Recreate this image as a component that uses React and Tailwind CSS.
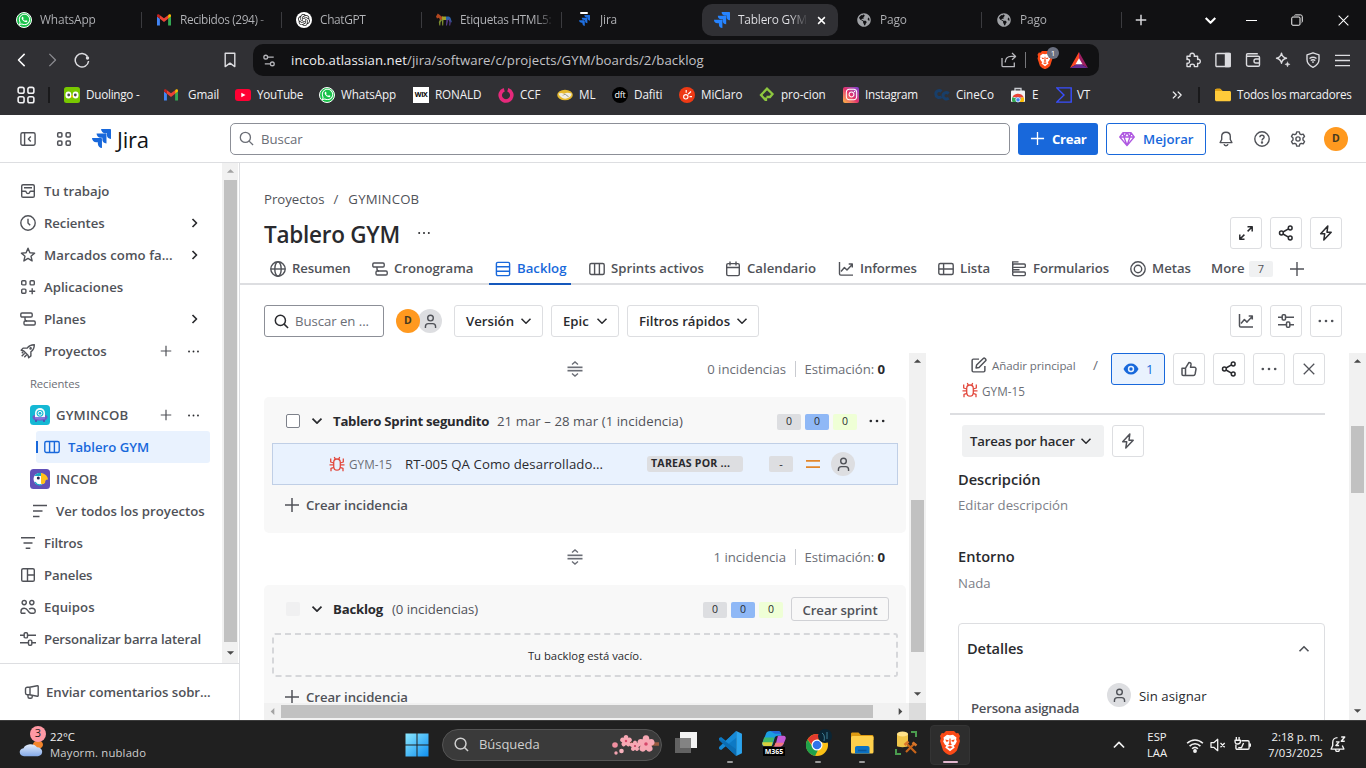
import React from "react";
import { FaWhatsapp, FaInstagram, FaGlobeAmericas } from "react-icons/fa";
import { SiOpenai } from "react-icons/si";

/* ---------- icon helpers ---------- */

const Svg = ({ s = 16, vb = "0 0 16 16", sw = 1.4, className = "", children }) => (
  <svg width={s} height={s} viewBox={vb} fill="none" stroke="currentColor" strokeWidth={sw} strokeLinecap="butt" strokeLinejoin="round" className={"shrink-0 " + className}>
    {children}
  </svg>
);

const paths = {
  sidebar: <><rect x="0.9" y="1.8" width="14.2" height="12.4" rx="1.6" /><path d="M4.6 2v12M10.8 5.6 8.4 8l2.4 2.4" /></>,
  grid: <><rect x="1.7" y="1.7" width="4.2" height="4.2" rx="1" /><rect x="10.1" y="1.7" width="4.2" height="4.2" rx="1" /><rect x="1.7" y="10.1" width="4.2" height="4.2" rx="1" /><rect x="10.1" y="10.1" width="4.2" height="4.2" rx="1" /></>,
  inbox: <><rect x="1.7" y="1.7" width="12.6" height="12.6" rx="1.4" /><path d="M4 4.8h8M1.7 8.2h3.6c.5 0 .7.4.9.9.2.7.7 1.4 1.8 1.4s1.600-.7 1.800-1.400c.2-.5.4-.9.9-.9h3.600" /></>,
  clock: <><circle cx="8" cy="8" r="7.200" /><path d="M8 3.800V8l2.200 2.200" /></>,
  star: <path d="M8 1.200 9.900 5.700l4.700.4-3.600 3.100 1.100 4.700L8 11.400l-4.100 2.500L5 9.200 1.400 6.100l4.700-.4z" />,
  apps: <><rect x="1.700" y="1.700" width="4.200" height="4.200" rx="1" /><rect x="10.100" y="1.700" width="4.200" height="4.200" rx="1" /><rect x="1.700" y="10.100" width="4.200" height="4.200" rx="1" /><path d="M12.200 9.200v6M9.200 12.200h6" /></>,
  plan: <><rect x=".8" y="2" width="11.400" height="4" rx="1.200" /><rect x="4" y="10" width="11.200" height="4" rx="1.200" /><path d="M5 6v2a2 2 0 0 0 2 2" /></>,
  rocket: <><path d="M14.300 1.700c-3.300 0-5.400 1-7.100 3.400H3.100L1.200 7.300l2.600.7 4.200 4.200.7 2.600 2.200-1.900V8.800c2.400-1.700 3.400-3.800 3.400-7.100z" /><path d="m4.700 10.200-3 3M6.700 11.700l-2.400 2.500M3.300 8.800l-1.500 1.500" /><circle cx="10.600" cy="5.400" r=".6" /></>,
  board: <><rect x=".8" y="2.500" width="14.400" height="11" rx="1.500" /><path d="M5.600 2.500v11M10.400 2.500v11" /></>,
  lines: <path d="M1 2.500h14M1 8h9.500M1 13.500h6.500" />,
  filter: <path d="M1 2.700h14M3.500 8h9M5.700 13.300h4.600" />,
  panels: <><rect x="1.700" y="1.700" width="12.600" height="12.600" rx="1.400" /><path d="M7.500 1.700v12.600M7.500 8h6.800" /></>,
  team: <><circle cx="4.200" cy="3.600" r="2.100" /><circle cx="11.800" cy="3.600" r="2.100" /><path d="M1 14.200v-2c0-1.700 1.300-2.900 3.200-2.900 2.800 0 3.200 1.900 4.500 3.500.7.900 1.100 1.400 2.200 1.400h2.700c1 0 1.600-.6 1.600-1.600v-.6c0-1.700-1.300-2.800-3.300-2.800-1.200 0-2 .3-2.800.9M1 14.200h4.500" /></>,
  sliders: <><path d="M0 4.300h4M8 4.300h8M0 11.700h8M12 11.700h4" /><rect x="4.200" y="1.700" width="3.300" height="5.200" rx="1" /><rect x="8.500" y="9.100" width="3.300" height="5.200" rx="1" /></>,
  megaphone: <><path d="M5.500 3.300 13.300 1.700c.5-.1.900.2.900.7v9.200c0 .5-.4.800-.9.700L5.500 10.700H3.200a1.700 1.700 0 0 1-1.700-1.700V5c0-1 .8-1.700 1.700-1.700zM6 3.300v7.400M4 10.700v2.100c0 .9.700 1.500 1.500 1.500h1.300c.8 0 1.400-.6 1.400-1.400v-1.700" /></>,
  globe: <><circle cx="8" cy="8" r="7.200" /><ellipse cx="8" cy="8" rx="3.200" ry="7.200" /><path d="M.8 8h14.400" /></>,
  backlog: <><rect x="1.400" y="1.400" width="13.200" height="13.200" rx="1.400" /><path d="M1.400 5.800h13.200M1.400 10.200h13.200" /></>,
  calendar: <><rect x="1.700" y="2.600" width="12.600" height="12" rx="1.400" /><path d="M1.700 6.500h12.600M5 .5v4M11 .5v4" /></>,
  chart: <><path d="M1.500 1v11.800c0 .8.500 1.300 1.300 1.300H15M3 10.500l3.400-4 2.600 2.600 5-5.400M10.700 3h3.600v3.600" /></>,
  table: <><rect x=".8" y="2.500" width="14.400" height="11" rx="1.500" /><path d="M.8 8h14.400M5.600 2.500v11" /></>,
  form: <><path d="M1 .9h6.500M1.700 1v3.500M1.700 8.300v3" /><rect x="1.700" y="3" width="12.600" height="3.400" rx="1" /><path d="M1.700 6v2c0 .5.300.8.800.8h6" /><rect x="1.700" y="11" width="12.600" height="3.600" rx="1" /></>,
  goal: <><circle cx="8" cy="8" r="7.200" /><circle cx="8" cy="8" r="3.700" /></>,
  plus: <path d="M8 1v14M1 8h14" />,
  search: <><circle cx="6.800" cy="6.800" r="5.400" /><path d="m10.800 10.800 4.200 4.200" /></>,
  down: <path d="M3.500 5.700 8 10.200l4.500-4.500" />,
  up: <path d="M3.500 10.200 8 5.700l4.500 4.500" />,
  right: <path d="M5.700 3.500 10.200 8l-4.500 4.500" />,
  navright: <path d="M5.500 4 9.500 8l-4 4" />,
  left: <path d="M10.200 3.500 5.700 8l4.500 4.500" />,
  chevL: <path d="M11 1 4 8l7 7" />,
  chevR: <path d="m5 1 7 7-7 7" />,
  dots: <g fill="currentColor" stroke="none"><circle cx="2.500" cy="8" r="1.150" /><circle cx="8" cy="8" r="1.150" /><circle cx="13.500" cy="8" r="1.150" /></g>,
  expand: <path d="M9.500 1.800h4.700v4.700M14 2 9.600 6.400M6.500 14.200H1.800V9.500M2 14l4.400-4.400" />,
  share: <><circle cx="12.200" cy="3" r="1.900" /><circle cx="3.400" cy="8" r="1.900" /><circle cx="12.200" cy="13" r="1.900" /><path d="m5 7 5.500-3.100M5 9l5.500 3.100" /></>,
  bolt: <path d="M9.800 1 2.700 8.800h4l-.9 6.200 7.400-7.700H9z" />,
  thumb: <path d="M1 7.200h3.500v7.300H2.200c-.7 0-1.200-.5-1.200-1.200zM4.500 7.200 8 1.400c1.400 0 2.200 1 2 2.300L9.500 6.300h3.900c1 0 1.800.9 1.600 1.900l-.9 4.800c-.2.900-.8 1.500-1.700 1.500H4.500" />,
  close: <path d="m2 2 12 12M14 2 2 14" />,
  edit: <><path d="M8.500 2H3.200C2.500 2 2 2.500 2 3.200v9.600c0 .7.500 1.200 1.200 1.200h9.600c.7 0 1.200-.5 1.200-1.200V8.500" /><path d="m5.700 10.300.5-2.700L12.500 1.400c.5-.5 1.100-.5 1.600 0l.6.6c.4.500.4 1.100 0 1.500L8.500 9.800z" /></>,
  person: <><circle cx="8" cy="4.300" r="3" /><path d="M2.600 15v-1.600c0-1.900 1.300-3.100 3.100-3.100h4.600c1.800 0 3.100 1.200 3.100 3.100V15" /></>,
  bell: <><path d="M8 1.200c2.600 0 4.300 1.900 4.300 4.300v3l1.600 3.100H2.100l1.600-3.100v-3C3.700 3.100 5.400 1.200 8 1.200zM6 13.200c.2 1 .9 1.600 2 1.600s1.800-.6 2-1.600" /></>,
  help: <><circle cx="8" cy="8" r="7.200" /><path d="M5.900 6.300c0-1.200.9-2 2.100-2s2.100.8 2.100 1.900c0 1.400-2.100 1.500-2.100 3.200" /><circle cx="8" cy="11.500" r=".5" /></>,
  gear: <><path d="m6.700.9-.5 2-1.400.8-2-.6L1.500 5.400 3 6.900v2.200l-1.500 1.500 1.300 2.300 2-.6 1.400.8.500 2h2.600l.5-2 1.400-.8 2 .6 1.300-2.300L13 9.100V6.900l1.500-1.500-1.300-2.300-2 .6-1.400-.8-.5-2z" /><circle cx="8" cy="8" r="2.100" /></>,
  bug: <><path d="M4.700 6.500c0-2.200 1.200-3.500 3.300-3.500s3.300 1.300 3.300 3.500v3.700c0 2.400-1.300 4-3.300 4s-3.300-1.600-3.300-4z" /><path d="M4.700 7 1.700 6V2.500M11.300 7l3-1V2.500M4.700 8.800H.5M11.300 8.800h4.200M5 11.300l-3 1v2.900M11 11.300l3 1v2.900M5.300 1l1 2.200M10.700 1l-1 2.200" /></>,
  bookmark: <path d="M3.200 1.200h9.600v13.400L8 11.100l-4.800 3.500z" />,
  site: <><circle cx="4" cy="4.400" r="2" /><path d="M6 4.400h6.500M3 11.600h5.500" /><circle cx="11" cy="11.600" r="2" /></>,
  shareout: <path d="M1 6v7.500c0 .7.500 1.200 1.200 1.200h11.100V10.500M4.200 10.400c.2-3.800 2.600-6 6-6h4M11 1l3.600 3.400L11 7.700" />,
  puzzle: <path d="M2 4.300h3.200C4.500 2.500 5.500 1.200 7.200 1.200S9.900 2.500 9.200 4.300h3.400v3.200c1.500-.6 2.700.3 2.700 1.900s-1.200 2.500-2.700 1.900v3.300H9.300c.5-1.500-.4-2.500-2-2.500s-2.500 1-2 2.500H2v-3.500c1.700.6 2.600-.4 2.600-1.800S3.700 6.900 2 7.500z" />,
  wallet: <><path d="M1.500 3.800v8.700c0 1 .7 1.700 1.700 1.700h10c.8 0 1.300-.5 1.300-1.300V5.500c0-.8-.5-1.300-1.300-1.300H2.600c-.7 0-1.100-.5-1.100-1.200s.4-1.200 1.100-1.200h10.200" /><path d="M14.500 7H10.800C9.600 7 9 7.700 9 9s.6 2 1.800 2h3.700" /></>,
  sparkle: <><path d="M6.500 1.200c.5 3.200 1.700 4.400 5 5-3.300.6-4.500 1.800-5 5-.6-3.200-1.800-4.400-5-5 3.200-.6 4.400-1.800 5-5z" /><path d="M12.500 9.700c.3 1.700.9 2.300 2.600 2.600-1.700.3-2.300.9-2.600 2.600-.3-1.700-.9-2.300-2.600-2.600 1.700-.3 2.300-.9 2.600-2.600z" fill="currentColor" strokeWidth=".5" /></>,
  vpn: <><path d="m8 .8 6 2v4.800c0 3.600-2.200 6-6 7.700-3.800-1.700-6-4.100-6-7.700V2.800z" /><path d="M4.500 6.500c2.200-1.600 4.800-1.600 7 0M5.700 8.500c1.500-1 3.100-1 4.600 0M7.200 10.400c.5-.4 1.100-.4 1.600 0" /></>,
  menu: <path d="M0 2.500h16M0 8h16M0 13.500h16" />,
};

const I = ({ n, ...p }) => <Svg {...p}>{paths[n]}</Svg>;

const JiraMark = ({ s = 16, c = "#2684ff" }) => (
  <svg width={s} height={s} viewBox="0 0 24 24" fill={c} className="shrink-0">
    <path d="M11.571 11.513H0a5.218 5.218 0 0 0 5.232 5.215h2.130v2.057A5.215 5.215 0 0 0 12.575 24V12.518a1.005 1.005 0 0 0-1.005-1.005zm5.723-5.756H5.736a5.215 5.215 0 0 0 5.215 5.214h2.129v2.058a5.218 5.218 0 0 0 5.215 5.214V6.758a1.001 1.001 0 0 0-1.001-1.001zM23.013 0H11.455a5.215 5.215 0 0 0 5.215 5.215h2.129v2.057A5.215 5.215 0 0 0 24 12.483V1.005A1.001 1.001 0 0 0 23.013 0Z" />
  </svg>
);

const Whats = () => (
  <span className="flex size-4 shrink-0 items-center justify-center rounded-full border border-white bg-[#19c24a]">
    <FaWhatsapp size={13} color="#fff" />
  </span>
);

const Gmail = () => (
  <svg width="16" height="16" viewBox="0 0 16 16" className="shrink-0">
    <path d="M1 13.500h2.900V6.800L1 4.600z" fill="#4285f4" />
    <path d="M12.100 13.500H15V4.600l-2.900 2.200z" fill="#34a853" />
    <path d="M12.100 3.200v3.600L15 4.600V3.700c0-1.400-1.400-1.800-2.200-1.100z" fill="#fbbc04" />
    <path d="M3.900 6.800V3.200L8 6.300l4.100-3.100v3.600L8 9.900z" fill="#ea4335" />
    <path d="M1 4.600l2.900 2.200V3.200l-.7-.6C2.300 1.900 1 2.400 1 3.700z" fill="#c5221f" />
  </svg>
);

const BraveMark = ({ w, h }) => (
  <svg width={w} height={h} viewBox="0 0 20 24" className="shrink-0">
    <path d="M6 0h8l2.200 2.200 2-.2 1.800 3-.8 2.300.8 2.700-3 9.300c-.5 1.400-4.700 4.700-7 4.700s-6.500-3.300-7-4.700L0 10l.8-2.700L0 5l1.800-3 2 .2z" fill="#fb4a17" />
    <path d="M10 4.300 13 3.800l3.500 2.600-.4 2 .7 2-1.800 3.300-1.400.8 1.200 2L10 20.300l-4.800-3.800 1.200-2-1.400-.8-1.800-3.300.7-2-.4-2L7 3.800z" fill="#fff" />
    <path d="m5.300 8.500 3.400.7-.5 1.400-1.900.1zM14.700 8.500l-3.400.7.5 1.400 1.900.1zM9.400 7.500h1.200l.2 5 1.300.8L10 14.500l-2.100-1.200 1.300-.8zM7.200 16l2.800-1 2.800 1-2.800 1.800z" fill="#fb4a17" />
  </svg>
);

/* ---------- shared pieces ---------- */

const Arrow = ({ dir, c = "#4a4a4a" }) => {
  const d = { up: "M1 6.500h8L5 2.500z", down: "M1 3.500h8L5 7.500z", left: "M7 1v8L3 5z", right: "M3 1v8l4-4z" }[dir];
  return <svg width="9" height="9" viewBox="0 0 10 10" className="shrink-0"><path d={d} fill={c} /></svg>;
};

const Unassigned = () => (
  <span className="flex size-6 shrink-0 items-center justify-center rounded-full bg-[#dddee1] text-[#505258]"><I n="person" s={15} sw={1.5} /></span>
);

const IconBtn = ({ n, s = 16, c = "text-[#292a2e]", sw = 1.5 }) => (
  <button className={"flex size-8 shrink-0 items-center justify-center rounded-[3px] border border-[#dddee1] bg-white " + c}><I n={n} s={s} sw={sw} /></button>
);

const AvatarD = () => (
  <span className="flex size-6 shrink-0 items-center justify-center rounded-full bg-[#ff991f] text-[10.500px] font-bold text-[#44381f]">D</span>
);

/* ---------- browser chrome ---------- */

const tabs = [
  { t: "WhatsApp", i: <Whats /> },
  { t: "Recibidos (294) -", tr: "tracking-[-0.400px]", i: <Gmail /> },
  { t: "ChatGPT", tr: "tracking-[-0.350px]", i: <span className="flex size-4 shrink-0 items-center justify-center rounded-full bg-white"><SiOpenai size={12} color="#222" /></span> },
  { t: "Etiquetas HTML5:", tr: "tracking-[-0.350px]", i: <svg width="16" height="16" viewBox="0 0 16 16" className="shrink-0"><path d="M0 4.500 1.800 1.500l1.700 1.300 2 1.700H7v3.200L4 8 3 5.700l-2 .8z" fill="#b3471f" /><path d="M6 4.500h4V8H6z" fill="#a0a12c" /><path d="M10 4.500h3l1.500 1.200 1.300 4.300-.8.500-1.500-3L13 8h-3z" fill="#2b62a8" /><path d="M4 7.500 2.800 10l.5 3.500h1L4.500 10.500 6 8zM5.800 7.500 6.200 13.500h1L7.500 8z" fill="#7a8b2f" /><path d="M10.500 7.500 10 13.500h1l1-5zM12.300 7.500l1.200 2.500-.3 3.500h1l.6-4-1-2.500z" fill="#5a3f93" /></svg> },
  { t: "Jira", i: <span className="flex size-4 shrink-0 flex-col items-center"><span className="mb-px h-[2px] w-2 rounded-sm bg-white" /><JiraMark s={11} c="#1f6fe0" /></span> },
  { t: "Tablero GYM", active: true, i: <JiraMark s={16} c="#2684ff" /> },
  { t: "Pago", i: <FaGlobeAmericas size={14} color="#a0a2a6" className="mx-px shrink-0" /> },
  { t: "Pago", i: <FaGlobeAmericas size={14} color="#a0a2a6" className="mx-px shrink-0" /> },
];

const TabStrip = () => (
  <div className="flex h-10 items-center bg-[#111113] pl-0.5 text-[11.900px] tracking-[-0.150px] text-[#b4b5b9]">
    {tabs.map((x, k) =>
      x.active ? (
        <div key={k} className="flex h-8 w-[140px] shrink-0">
          <div className="flex h-8 w-[136px] shrink-0 items-center rounded-[10px] bg-[#303034] pl-3 text-[#e4e4e8]">
            {x.i}
            <span className="ml-2 w-[70px] whitespace-nowrap bg-linear-to-r from-[#e4e4e8] from-75% to-[#303034] bg-clip-text tracking-[-0.200px] text-transparent">{x.t}</span>
            <I n="close" s={9} sw={2.600} className="ml-[9px] text-white" />
          </div>
        </div>
      ) : (
        <div key={k} className="flex w-[140px] shrink-0 items-center">
          <div className="flex w-[139px] items-center pl-[14px]">
            <span className="flex w-4 justify-center">{x.i}</span>
            <span className={"ml-2 w-[95px] whitespace-nowrap bg-linear-to-r from-[#b4b5b9] from-80% to-[#111113] bg-clip-text text-transparent " + (x.tr || "")}>{x.t}</span>
          </div>
          {k !== 4 && <span className="h-4 w-px bg-[#3b3b3f]" />}
        </div>
      )
    )}
    <div className="flex w-[38px] justify-center text-[#d6d6da]"><I n="plus" s={12} sw={2} /></div>
    <div className="flex w-[59px] justify-end text-white"><I n="down" s={17} sw={2} /></div>
    <div className="flex flex-1 items-center pl-[27px] text-white">
      <span className="h-px w-[11px] bg-white" />
      <Svg s={12} sw={1.300} className="ml-[34px]"><rect x="1" y="4" width="11" height="11" rx="1.500" /><path d="M4.500 2c.3-.5.7-.8 1.500-.8h6.500c1.400 0 2.500.8 2.500 2.200V10c0 .8-.3 1.200-.8 1.500" /></Svg>
      <I n="close" s={13} sw={1.300} className="ml-[34px]" />
    </div>
  </div>
);

const Toolbar = () => (
  <div className="flex h-10 items-center bg-[#303034] text-[#dcdce0]">
    <div className="flex w-[253px] items-center pl-[14px]">
      <I n="chevL" s={14} sw={1.700} className="ml-px text-white" />
      <I n="chevR" s={14} sw={1.500} className="ml-[16px] text-[#8b8b90]" />
      <Svg s={16} sw={1.500} className="ml-[15px]"><path d="M13.500 4.500A6.700 6.700 0 1 0 14.600 9" /><circle cx="13.500" cy="6" r="1.700" fill="currentColor" stroke="none" /></Svg>
      <I n="bookmark" s={16} sw={1.400} className="ml-[132px]" />
    </div>
    <div className="flex h-8 w-[846px] items-center rounded-[10px] bg-[#111113] pl-[9px]">
      <I n="site" s={15} sw={1.400} className="text-[#b5b5ba]" />
      <span className="ml-[14px] mt-0.5 w-[700px] whitespace-nowrap text-[13.200px] tracking-[0.060px] text-[#c2c2c6]"><span className="text-[#ededf0]">incob.atlassian.net</span>/jira/software/c/projects/GYM/boards/2/backlog</span>
      <I n="shareout" s={16} sw={1.300} className="ml-[10px] text-[#b9b9be]" />
      <span className="ml-[8px] h-4 w-px bg-[#77777b]" />
      <span className="relative ml-[11px] flex">
        <BraveMark w={16} h={18} />
        <span className="absolute -top-[4px] left-[10px] flex size-3 items-center justify-center rounded-full bg-[#6b7080] text-[8px] text-white">1</span>
      </span>
      <svg width="18" height="16" viewBox="0 0 18 16" className="ml-[17px] shrink-0"><path d="M9 0 0 16l9-5z" fill="#ff4724" /><path d="m9 0 9 16-9-5z" fill="#9e1f63" /><path d="M0 16h18l-9-5z" fill="#662d91" /><path d="m9 6.300-3.500 5.900h7z" fill="#fff" /></svg>
    </div>
    <div className="flex flex-1 items-center gap-[14px] pl-[86px]">
      <I n="puzzle" s={16} sw={1.400} />
      <Svg s={16} sw={1.400}><rect x=".9" y="1.500" width="14.200" height="13" rx="1" /><rect x="10.500" y="1.500" width="4.600" height="13" fill="currentColor" /></Svg>
      <I n="wallet" s={16} /><I n="sparkle" s={16} /><I n="vpn" s={16} /><I n="menu" s={15} sw={1.400} />
    </div>
  </div>
);

const bookmarks = [
  { t: "Duolingo -", w: "w-[99px]", tr: "tracking-[-0.250px]", i: <svg width="16" height="16" viewBox="0 0 16 16"><rect width="16" height="16" rx="2.500" fill="#78c800" /><rect x="1.500" y="4.500" width="5.800" height="7" rx="2.900" fill="#fff" /><rect x="8.700" y="4.500" width="5.800" height="7" rx="2.900" fill="#fff" /><circle cx="4.700" cy="8" r="1.400" fill="#4b4b4b" /><circle cx="11.300" cy="8" r="1.400" fill="#4b4b4b" /><path d="m6.800 9 1.200-.8L9.200 9 8 11z" fill="#ffc200" /></svg> },
  { t: "Gmail", w: "w-[72px]", i: <Gmail />, g: "ml-[9px]" },
  { t: "YouTube", w: "w-[84px]", tr: "tracking-[-0.300px]", i: <svg width="16" height="16" viewBox="0 0 16 16"><rect y="2" width="16" height="12" rx="3" fill="#ff0033" /><path d="m6.300 5.700 4.200 2.300-4.200 2.300z" fill="#fff" /></svg> },
  { t: "WhatsApp", w: "w-[94px]", i: <Whats /> },
  { t: "RONALD", w: "w-[85px]", i: <span className="flex size-4 items-center justify-center bg-white text-[7px] font-bold tracking-[-0.500px] text-black">WIX</span> },
  { t: "CCF", w: "w-[59px]", i: <svg width="16" height="16" viewBox="0 0 16 16"><path d="M6.200 2.700A5.800 5.800 0 1 0 9.800 2.700" fill="none" stroke="#e6297b" strokeWidth="3.600" /></svg> },
  { t: "ML", w: "w-[55px]", i: <svg width="16" height="16" viewBox="0 0 16 16"><ellipse cx="8" cy="8" rx="7.800" ry="5.300" fill="#e5b92f" /><path d="M1.500 6.500c2-.8 3.500-.8 5.500.2 1.500-.8 4-1.300 7.500-.2.300 2-1.500 3.500-3.500 4.500s-4 1-5.500 0-3.500-2-4-4.500z" fill="#f2efe4" /><path d="M6 8.500c1-1.500 2.500-1.500 3.500-.5l2 2" stroke="#6c6a55" strokeWidth=".7" fill="none" /></svg> },
  { t: "Dafiti", w: "w-[67px]", i: <span className="flex size-4 items-center justify-center rounded-full bg-black text-[9px] tracking-[-0.300px] text-white">dft</span> },
  { t: "MiClaro", w: "w-[80px]", i: <svg width="16" height="16" viewBox="0 0 16 16"><circle cx="8" cy="8" r="8" fill="#ee3a15" /><circle cx="6.800" cy="9.800" r="2.200" stroke="#fff" fill="none" strokeWidth="1.100" /><path d="M7.200 3v2.700M9 7.200l3-2.700M10.500 9.700H13" stroke="#fff" strokeWidth="1.200" /></svg> },
  { t: "pro-cion", w: "w-[84px]", i: <svg width="16" height="16" viewBox="0 0 16 16"><path d="m6.500 13-4.500-5 6-6.300L13.500 7 11 10H7.500M7 10.500V14" fill="none" stroke="#8dc63f" strokeWidth="2.300" /></svg> },
  { t: "Instagram", w: "w-[91px]", tr: "tracking-[-0.250px]", i: <span className="flex size-4 items-center justify-center rounded-[2px] bg-linear-to-tr from-[#fdb53b] via-[#e1306c] to-[#7b38d6]"><FaInstagram size={13} color="#fff" /></span> },
  { t: "CineCo", w: "w-[76px]", i: <svg width="16" height="16" viewBox="0 0 16 16" fill="none" stroke="#183e69" strokeWidth="3"><path d="M7.500 4.500C5 2.500 1.800 4 1.800 7s3 4.500 5.700 2.700M14.700 6.500c-2.500-2-5.700-.5-5.700 2.200s3 4.300 5.700 2.500" /></svg> },
  { t: "E", w: "w-[46px]", i: <svg width="16" height="16" viewBox="0 0 16 16"><path d="M5 4V1.500h6V4" fill="none" stroke="#c9ccd1" strokeWidth="1.300" /><rect x="1" y="3.500" width="14" height="11.500" rx="1" fill="#f1f3f4" /><path d="M3 15a5 5 0 0 1 10 0" fill="#4285f4" /><path d="M2.500 10c1-3.700 9-5 11.300.5H8.500z" fill="#ea4335" /><path d="M2.500 10c-1 2-.5 4 0 5H6l1-3z" fill="#34a853" /><path d="M13.800 10.500c.7 2 .3 3.500-.3 4.500H9.500l1.500-4.500z" fill="#fbbc04" /><circle cx="8" cy="12.800" r="2.200" fill="#4285f4" stroke="#fff" strokeWidth=".8" /></svg> },
  { t: "VT", w: "w-[46px]", i: <svg width="16" height="16" viewBox="0 0 16 16"><path d="M.8.900H15.200v14.200H.8L8 8z" fill="none" stroke="#394eff" strokeWidth="1.400" /></svg>, g: "ml-[5px]" },
];

const Bookmarks = () => (
  <div className="flex h-[35px] items-start bg-[#303034] pt-[5px] text-[11.700px] tracking-[-0.100px] text-[#f2f2f4]">
    <div className="flex h-5 flex-1 items-center">
      <Svg s={18} sw={1.400} className="ml-[17px]"><rect x="1" y="1.200" width="5.300" height="5.300" rx="1.600" /><rect x="9.700" y="1.200" width="5.300" height="5.300" rx="1.600" /><rect x="1" y="9.600" width="5.300" height="5.300" rx="1.600" /><rect x="9.700" y="9.600" width="5.300" height="5.300" rx="1.600" /></Svg>
      <span className="ml-[13px] mr-[14px] h-4 w-[2px] bg-[#19191b]" />
      {bookmarks.map((b) => (
        <span key={b.t} className={"flex shrink-0 items-center " + b.w}>
          <span className="size-4 shrink-0">{b.i}</span>
          <span className={"whitespace-nowrap " + (b.g || "ml-[6px]") + " " + (b.tr || "")}>{b.t}</span>
        </span>
      ))}
    </div>
    <div className="flex h-5 w-[195px] items-center">
      <Svg s={12} sw={1.700}><path d="m2.500 3.500 4.500 4.500L2.500 12.500M9 3.500 13.500 8 9 12.500" /></Svg>
      <span className="ml-[15px] mr-[15px] h-4 w-[2px] bg-[#19191b]" />
      <svg width="16" height="14" viewBox="0 0 16 14" className="shrink-0"><path d="M0 2.500C0 1.500.7.800 1.700.800h3.500L7.500 3h7c.9 0 1.500.6 1.500 1.500v7.300c0 .9-.6 1.500-1.500 1.500H1.700C.700 13.300 0 12.700 0 11.800z" fill="#ffca3a" /><path d="M0 3V2.500C0 1.500.7.800 1.700.800h3.500L7.500 3z" fill="#e0a011" /></svg>
      <span className="ml-[6px] whitespace-nowrap tracking-[-0.280px]">Todos los marcadores</span>
    </div>
  </div>
);

/* ---------- Jira ---------- */

const Header = () => (
  <header className="flex h-12 shrink-0 items-center border-b border-[#dddee1] bg-white text-[#505258]">
    <I n="sidebar" className="ml-5" />
    <I n="grid" className="ml-5" sw={1.500} />
    <span className="ml-5 flex w-[138px] items-center gap-[6px]">
      <JiraMark s={19} c="#1868db" />
      <span className="mt-px text-[22px] font-medium tracking-[-0.200px] text-[#101214]">Jira</span>
    </span>
    <div className="flex h-8 w-[780px] items-center rounded-[5px] border border-[#8c8f97] pl-2 text-[#6b6e76]">
      <I n="search" s={15} />
      <span className="ml-[7px] mt-0.5 text-[13.200px] tracking-[-0.050px]">Buscar</span>
    </div>
    <button className="ml-2 flex h-8 w-20 items-center rounded-[3px] bg-[#1868db] pl-[12px] text-[13.200px] font-bold tracking-[-0.350px] text-white">
      <I n="plus" s={15} /><span className="ml-[7px] mt-0.5">Crear</span>
    </button>
    <button className="ml-2 flex h-8 w-[100px] items-center rounded-[3px] border border-[#1868db] pl-3 text-[13.200px] font-semibold text-[#1868db]">
      <Svg s={16} className="text-[#af59e1]" sw={1.400}><path d="M4 1.700h8L15.200 6 8 14.600.8 6zM.8 6h14.400M5 6l3 8.500L11 6M4 1.700 5.200 6 8 1.700 10.800 6 12 1.700" /></Svg>
      <span className="ml-2 mt-0.5">Mejorar</span>
    </button>
    <I n="bell" className="ml-3" /><I n="help" className="ml-5" /><I n="gear" className="ml-5" />
    <span className="ml-[18px]"><AvatarD /></span>
  </header>
);

const nav = [
  { t: "Tu trabajo", i: "inbox" },
  { t: "Recientes", i: "clock", r: true, tr: "tracking-[-0.100px]" },
  { t: "Marcados como fa...", i: "star", r: true, tr: "tracking-[0.050px]" },
  { t: "Aplicaciones", i: "apps" },
  { t: "Planes", i: "plan", r: true },
  { t: "Proyectos", i: "rocket", more: true },
];
const nav2 = [
  { t: "Filtros", i: "filter", tr: "tracking-[-0.150px]" },
  { t: "Paneles", i: "panels", tr: "tracking-[-0.150px]" },
  { t: "Equipos", i: "team", tr: "tracking-[0.050px]" },
  { t: "Personalizar barra lateral", i: "sliders", tr: "tracking-[-0.190px]" },
];

const More = () => (
  <span className="mr-[22px] flex items-center gap-[15px]"><I n="plus" s={12} sw={1.600} /><I n="dots" s={13} className="text-[#292a2e]" /></span>
);

const NavRow = ({ t, i, r, more, tr = "" }) => (
  <div className="flex h-8 items-center pl-5">
    <I n={i} />
    <span className={"ml-2 mt-0.5 flex-1 whitespace-nowrap " + tr}>{t}</span>
    {r && <I n="navright" s={16} sw={1.700} className="mr-[19px] text-[#292a2e]" />}
    {more && <More />}
  </div>
);

const Sidebar = () => (
  <aside className="flex w-[240px] shrink-0 flex-col border-r border-[#dddee1] bg-white text-[13.200px] font-semibold text-[#505258]">
    <div className="flex h-[500px]">
      <nav className="w-[222px] pt-3">
        {nav.map((x) => <NavRow key={x.t} {...x} />)}
        <div className="flex h-8 items-center pl-[30px] text-[11.300px] font-normal text-[#6b6e76]"><span className="mt-0.5 tracking-[-0.100px]">Recientes</span></div>
        <div className="flex h-8 items-center pl-[30px]">
          <svg width="20" height="20" viewBox="0 0 20 20" className="shrink-0"><rect width="20" height="20" rx="3.500" fill="#15b8d4" /><path d="M2.500 12c0-1.500 2-2 3-2h9c1 0 3 .5 3 2s-1.500 3.500-3.500 3.500H6c-2 0-3.500-2-3.500-3.500z" fill="#6e5dc6" /><path d="M5 8a5 5 0 0 1 10 0v4H5z" fill="#f4fbfc" /><circle cx="10" cy="8.300" r="3.400" fill="#15b8d4" /><circle cx="10" cy="8.300" r="1.900" fill="none" stroke="#fff" /><path d="M5 12h10v1.500c-2 1.500-8 1.500-10 0z" fill="#8777d9" /><path d="M6 15v2M14 15v2" stroke="#5243aa" strokeWidth="1.500" /></svg>
          <span className="ml-[6px] mt-0.5 flex-1 tracking-[0.120px]">GYMINCOB</span><More />
        </div>
        <div className="ml-9 mr-3 flex h-8 items-center rounded-[3px] bg-[#e9f2fe] text-[#1868db]">
          <span className="h-3 w-[2px] bg-[#1868db]" /><I n="board" className="ml-[6px]" /><span className="ml-2 mt-0.5 whitespace-nowrap">Tablero GYM</span>
        </div>
        <div className="flex h-8 items-center pl-[30px]">
          <svg width="20" height="20" viewBox="0 0 20 20" className="shrink-0"><rect width="20" height="20" rx="3.500" fill="#6150b8" /><circle cx="9.500" cy="10" r="6" fill="#fff" /><path d="M4.500 7c1.500-2.500 4-3.500 6.500-3.200V7z" fill="#18a8c4" /><path d="M11 4c4 .5 7 3.500 7 6.500L15.500 11 15 14c-2 1.500-4 .8-4 .8z" fill="#ffc21a" /><circle cx="8.300" cy="9" r="1.500" fill="#2b2350" /><path d="M5 13c1.500 2.500 4 3.500 6.500 2.600" stroke="#18a8c4" strokeWidth="1.300" fill="none" /></svg>
          <span className="ml-[6px] mt-0.5">INCOB</span>
        </div>
        <div className="flex h-8 items-center pl-8"><I n="lines" sw={1.500} /><span className="ml-2 mt-0.5 whitespace-nowrap">Ver todos los proyectos</span></div>
        {nav2.map((x) => <NavRow key={x.t} {...x} />)}
      </nav>
      <div className="flex w-[16px] flex-col items-center bg-[#f1f1f1]">
        <div className="flex h-[17px] items-center"><Arrow dir="up" c="#a3a3a3" /></div>
        <div className="h-[462px] w-[13px] bg-[#c1c1c1]" />
        <div className="flex flex-1 items-center"><Arrow dir="down" /></div>
      </div>
    </div>
    <div className="flex flex-1 items-center border-t border-[#dddee1] pl-6"><I n="megaphone" /><span className="ml-[6px] mt-0.5 whitespace-nowrap tracking-[-0.040px]">Enviar comentarios sobr...</span></div>
  </aside>
);

const views = [
  { t: "Resumen", i: "globe", w: "w-[102px]", tr: "tracking-[-0.130px]" },
  { t: "Cronograma", i: "plan", w: "w-[123px]" },
  { t: "Backlog", i: "backlog", w: "w-[94px]", on: true },
  { t: "Sprints activos", i: "board", w: "w-[136px]" },
  { t: "Calendario", i: "calendar", w: "w-[113px]" },
  { t: "Informes", i: "chart", w: "w-[100px]", tr: "tracking-[-0.100px]" },
  { t: "Lista", i: "table", w: "w-[73px]" },
  { t: "Formularios", i: "form", w: "w-[119px]", tr: "tracking-[-0.080px]" },
  { t: "Metas", i: "goal", w: "w-[81px]" },
];

const Views = () => (
  <div className="flex h-[33px] border-b-2 border-[#dddee1] pl-[30px] text-[13.200px] font-semibold text-[#505258]">
    {views.map((v) => (
      <div key={v.t} className={"flex h-[33px] shrink-0 " + v.w}>
        <div className={"flex h-[33px] items-center " + (v.on ? "-ml-[6px] w-[82px] border-b-2 border-[#1558bc] pl-[6px] pt-[3px] text-[#1868db]" : "pt-px")}>
          <I n={v.i} /><span className={"ml-[6px] whitespace-nowrap " + (v.tr || "")}>{v.t}</span>
        </div>
      </div>
    ))}
    <div className="flex items-center pt-[3px]">
      <span className="w-[38px]">More</span>
      <span className="flex h-4 w-6 items-center justify-center rounded-[2px] bg-[#f0f1f2] text-[11px] font-normal">7</span>
      <I n="plus" s={16} className="ml-4" sw={1.400} />
    </div>
  </div>
);

const Drop = ({ t, w }) => (
  <button className={"flex h-8 items-center rounded-[3px] border border-[#dddee1] bg-white pl-[11px] text-[13.200px] font-semibold text-[#292a2e] " + w}>
    <span className="mt-px flex-1 whitespace-nowrap text-left">{t}</span><I n="down" s={16} sw={1.500} className="mr-[8px]" />
  </button>
);

const Filters = () => (
  <div className="mt-5 flex h-8 items-center pl-6">
    <div className="flex h-8 w-[120px] items-center rounded-[3px] border border-[#8c8f97] pl-[9px] text-[#292a2e]">
      <I n="search" s={15} sw={1.600} /><span className="ml-[6px] mt-px text-[13.200px] tracking-[-0.050px] text-[#6b6e76]">Buscar en ...</span>
    </div>
    <span className="ml-3 flex"><span className="z-10"><AvatarD /></span><span className="-ml-[2px]"><Unassigned /></span></span>
    <div className="ml-3 flex flex-1 gap-2"><Drop t="Versión" w="w-[89px]" /><Drop t="Epic" w="w-[68px]" /><Drop t="Filtros rápidos" w="w-[132px]" /></div>
    <div className="mr-6 flex gap-2"><IconBtn n="chart" c="text-[#505258]" /><IconBtn n="sliders" c="text-[#505258]" /><IconBtn n="dots" s={18} c="text-[#505258]" /></div>
  </div>
);

const Summary = ({ n }) => (
  <div className="flex h-8 items-center text-[13.200px] text-[#6b6e76]">
    <span className="flex w-[621px] items-center">
      <span className="w-[303px]" />
      <svg width="16" height="16" viewBox="0 0 16 16" fill="none" stroke="#6b6e76" strokeWidth="1.400" className="shrink-0"><path d="M.5 6.300h15M.5 9.700h15" /><path d="M.5 8h15" stroke="#dcdcde" /><path d="M5 3.500 8 1l3 2.500M5 12.500 8 15l3-2.500" /></svg>
      <span className="mt-0.5 flex-1 text-right">{n}</span>
      <span className="ml-[9px] mr-2 h-4 w-px bg-[#c9cbd0]" />
      <span className="mt-0.5 w-[81px] whitespace-nowrap text-right tracking-[-0.060px]">Estimación: <b className="text-[#292a2e]">0</b></span>
    </span>
  </div>
);

const Counts = () => (
  <span className="mt-px flex gap-1 text-[10.500px] text-[#292a2e]">
    <span className="flex h-4 w-6 items-center justify-center rounded-[2px] bg-[#dddee1]">0</span>
    <span className="flex h-4 w-6 items-center justify-center rounded-[2px] bg-[#8fb8f6]">0</span>
    <span className="flex h-4 w-6 items-center justify-center rounded-[2px] bg-[#efffd6]">0</span>
  </span>
);

const Create = () => (
  <div className="flex h-6 items-center pl-[12px] text-[13.200px] font-semibold text-[#505258]"><I n="plus" s={16} sw={1.500} /><span className="ml-[6px] mt-0.5 tracking-[-0.050px]">Crear incidencia</span></div>
);

const BacklogArea = () => (
  <div className="flex w-[662px] shrink-0 flex-col">
    <div className="flex h-[350px]">
      <div className="w-[645px] overflow-hidden">
        <Summary n="0 incidencias" />
        <section className="mt-3 h-[136px] w-[642px] rounded-[5px] bg-[#f8f8f8] px-2">
          <div className="flex h-[46px] items-center pt-[2px] text-[13.200px]">
            <span className="ml-[14px] size-[14px] rounded-[2px] border border-[#7d818a] bg-white" />
            <I n="down" s={16} sw={1.700} className="ml-[9px] text-[#292a2e]" />
            <span className="ml-[8px] mt-0.5 w-[164px] whitespace-nowrap font-bold tracking-[-0.250px] text-[#292a2e]">Tablero Sprint segundito</span>
            <span className="mt-0.5 flex-1 whitespace-nowrap tracking-[0.060px] text-[#505258]">21 mar – 28 mar (1 incidencia)</span>
            <Counts />
            <I n="dots" s={18} className="ml-[11px] mr-[12px] text-[#292a2e]" />
          </div>
          <div className="flex h-[42px] w-[626px] items-center border border-[#c0cfe6] bg-[#e9f2fe]">
            <I n="bug" className="ml-[56px] text-[#e2483d]" s={16} sw={1.300} />
            <span className="ml-[4px] mt-0.5 w-[55px] whitespace-nowrap text-[11.700px] tracking-[0.050px] text-[#6b6e76]">GYM-15</span>
            <span className="mt-0.5 flex-1 whitespace-nowrap pl-px text-[13.200px] tracking-[0.080px] text-[#292a2e]">RT-005 QA Como desarrollado...</span>
            <span className="flex h-4 w-24 items-center rounded-[3px] bg-[#dddee1] pl-[4px] text-[10.600px] font-bold tracking-[0.220px] text-[#292a2e]">TAREAS POR ...</span>
            <span className="ml-[26px] flex h-4 w-6 items-center justify-center rounded-[2px] bg-[#dddee1] text-[11px] text-[#292a2e]">-</span>
            <svg width="16" height="16" viewBox="0 0 16 16" className="ml-[12px] shrink-0"><path d="M1 4.800h14M1 11.200h14" stroke="#e2862a" strokeWidth="1.700" /></svg>
            <span className="ml-[10px] mr-[42px]"><Unassigned /></span>
          </div>
          <div className="h-2" />
          <Create />
        </section>
        <div className="mt-2"><Summary n="1 incidencia" /></div>
        <section className="mt-3 h-[133px] w-[642px] rounded-t-[5px] bg-[#f8f8f8] px-2">
          <div className="flex h-12 items-center text-[13.200px]">
            <span className="ml-[14px] size-[14px] rounded-[2px] bg-[#f0f0f1]" />
            <I n="down" s={16} sw={1.700} className="ml-[9px] text-[#292a2e]" />
            <span className="ml-[8px] mt-0.5 w-[59px] font-bold tracking-[-0.200px] text-[#292a2e]">Backlog</span>
            <span className="mt-0.5 flex-1 tracking-[-0.030px] text-[#505258]">(0 incidencias)</span>
            <Counts />
            <button className="ml-[8px] mr-[9px] h-6 w-[98px] whitespace-nowrap rounded-[3px] border border-[#d0d1d5] pt-0.5 text-[13.200px] font-semibold leading-5 tracking-[-0.080px] text-[#505258]">Crear sprint</button>
          </div>
          <div className="flex h-[44px] w-[626px] items-center justify-center rounded-[3px] border-2 border-dashed border-[#d6d7da] text-[11.300px] text-[#292a2e]"><span className="mt-0.5">Tu backlog está vacío.</span></div>
          <div className="h-2" />
          <Create />
        </section>
      </div>
      <div className="flex w-[17px] flex-col items-center bg-[#f1f1f1]">
        <div className="flex h-[17px] items-center"><Arrow dir="up" /></div>
        <div className="mt-[130px] h-[152px] w-[13px] bg-[#c1c1c1]" />
        <div className="mb-px mt-auto flex h-[17px] items-center"><Arrow dir="down" /></div>
      </div>
    </div>
    <div className="flex h-[17px] bg-[#dcdcdc]">
      <div className="flex w-[645px] items-center bg-[#f1f1f1]">
        <span className="flex w-[17px] justify-center"><Arrow dir="left" c="#a3a3a3" /></span>
        <span className="h-[13px] w-[592px] bg-[#c1c1c1]" />
        <span className="ml-auto flex w-[17px] justify-center"><Arrow dir="right" /></span>
      </div>
    </div>
  </div>
);

const Detail = () => (
  <div className="ml-6 flex flex-1 flex-col overflow-hidden">
    <div className="flex h-[62px] w-[375px] shrink-0 border-b-2 border-[#dddee1]">
      <div className="flex w-[161px] flex-col pl-[12px] pt-[4px] text-[12px] text-[#6b6e76]">
        <div className="flex h-[17px] items-center"><I n="edit" s={17} sw={1.400} className="ml-[8px] text-[#505258]" /><span className="ml-[5px] w-[101px] whitespace-nowrap text-[11.500px] tracking-[-0.080px]">Añadir principal</span><span className="text-[13.500px]">/</span></div>
        <div className="mt-[9px] flex h-[17px] items-center"><I n="bug" sw={1.300} className="mb-1 text-[#e2483d]" /><span className="ml-[4px] mt-px text-[11.700px] tracking-[0.050px]">GYM-15</span></div>
      </div>
      <div className="flex gap-2">
        <button className="flex h-8 w-[54px] items-center rounded-[3px] border border-[#1868db] bg-[#e9f2fe] pl-[11px] text-[13.200px] text-[#1868db]">
          <svg width="16" height="16" viewBox="0 0 16 16" className="shrink-0"><path d="M8 2.500c3.400 0 6 2 7.500 5.500-1.500 3.500-4.100 5.500-7.500 5.500S2 11.500.5 8C2 4.500 4.600 2.500 8 2.500z" fill="#1868db" /><circle cx="8" cy="8" r="3.200" fill="#e9f2fe" /><circle cx="8" cy="8" r="1.700" fill="#1868db" /></svg>
          <span className="ml-[7px] mt-px">1</span>
        </button>
        <IconBtn n="thumb" c="text-[#505258]" /><IconBtn n="share" /><IconBtn n="dots" s={18} c="text-[#505258]" /><IconBtn n="close" s={14} c="text-[#505258]" />
      </div>
    </div>
    <div className="mt-[10px] flex shrink-0 gap-2 pl-3">
      <button className="flex h-8 w-[142px] items-center rounded-[3px] bg-[#f0f1f2] pl-2 text-[13.200px] font-semibold text-[#292a2e]"><span className="mt-px flex-1 whitespace-nowrap text-left tracking-[-0.150px]">Tareas por hacer</span><I n="down" s={16} sw={1.500} className="mr-[10px]" /></button>
      <IconBtn n="bolt" c="text-[#505258]" />
    </div>
    <div className="flex shrink-0 flex-col pl-2 text-[13.200px] text-[#7d8088]">
      <h3 className="mt-[10px] h-6 text-[14.600px] font-semibold leading-6 text-[#292a2e]">Descripción</h3>
      <p className="mt-[4px] h-5 leading-5">Editar descripción</p>
      <h3 className="mt-[29px] h-6 text-[14.600px] font-semibold leading-6 text-[#292a2e]">Entorno</h3>
      <p className="mt-[5px] h-5 leading-5">Nada</p>
      <div className="mt-[30px] h-[120px] w-[367px] rounded-[4px] border border-[#dddee1] text-[#292a2e]">
        <div className="flex h-[49px] items-center pl-2 text-[14.600px] font-semibold"><span className="flex-1 tracking-[-0.100px]">Detalles</span><I n="up" sw={1.600} className="mr-[12px] text-[#505258]" /></div>
        <div className="flex pl-3 pt-[10px]">
          <span className="w-[136px] pt-[16px] font-semibold tracking-[-0.250px] text-[#505258]">Persona asignada</span>
          <Unassigned /><span className="ml-2 pt-[4px] tracking-[0.060px]">Sin asignar</span>
        </div>
      </div>
    </div>
  </div>
);

const Main = () => (
  <main className="flex min-w-0 flex-1 flex-col bg-white">
    <div className="flex h-[46px] items-end pl-6 text-[13.200px] leading-5 text-[#505258]"><span>Proyectos</span><span className="ml-[9px] mr-[10px]">/</span><span className="tracking-[0.180px]">GYMINCOB</span></div>
    <div className="flex h-[43px] items-center pl-6 pt-[5px]">
      <h1 className="mt-[3px] w-[136px] whitespace-nowrap text-[22.500px] font-semibold leading-7 tracking-[-0.250px] text-[#292a2e]">Tablero GYM</h1>
      <span className="ml-[17px] flex flex-1"><I n="dots" s={14} className="text-[#292a2e]" /></span>
      <div className="mr-6 flex gap-2"><IconBtn n="expand" /><IconBtn n="share" /><IconBtn n="bolt" /></div>
    </div>
    <Views />
    <Filters />
    <div className="mt-4 flex min-h-0 flex-1 overflow-hidden pl-6">
      <BacklogArea />
      <Detail />
      <div className="flex w-[17px] flex-col items-center bg-[#f1f1f1]">
        <div className="flex h-[17px] items-center"><Arrow dir="up" /></div>
        <div className="mt-[56px] h-[67px] w-[13px] bg-[#c1c1c1]" />
        <div className="mb-px mt-auto flex h-[17px] items-center"><Arrow dir="down" /></div>
      </div>
    </div>
  </main>
);

/* ---------- taskbar ---------- */

const Flower = ({ x, y, r }) => (
  <g transform={`translate(${x} ${y})`}>
    {[0, 72, 144, 216, 288].map((a) => <ellipse key={a} cx="0" cy={-r * 0.6} rx={r * 0.42} ry={r * 0.5} fill="#f7a8b4" transform={`rotate(${a})`} />)}
    <circle r={r * 0.22} fill="#d6476a" />
  </g>
);

const TaskApp = ({ children, dot, on }) => (
  <span className={"flex h-10 w-10 shrink-0 flex-col items-center rounded-[4px] " + (on ? "border border-[#343434] bg-[#2d2d2d]" : "border border-transparent")}>
    <span className="flex h-[35px] items-center">{children}</span>
    {dot && <span className="h-[2.500px] w-[6px] rounded-full bg-[#9a9a9a]" />}
    {on && <span className="h-[2.500px] w-[15px] rounded-full bg-[#e3b8cf]" />}
  </span>
);

const Taskbar = () => (
  <footer className="flex h-12 shrink-0 items-center border-t border-[#3c3c3c] bg-[#202020] text-[11.300px] text-[#f2f2f2]">
    <div className="flex w-[405px] items-center pl-[18px]">
      <span className="relative flex w-[26px] pt-[6px]">
        <svg width="26" height="18" viewBox="0 0 26 22" preserveAspectRatio="none"><defs><linearGradient id="cl" x1="0" y1="0" x2="0" y2="1"><stop offset="0" stopColor="#e3edfb" /><stop offset="1" stopColor="#84a9e8" /></linearGradient></defs><circle cx="20" cy="7" r="5" fill="#f4842a" /><path d="M6 21a5 5 0 0 1-.5-9.800A7.500 7.500 0 0 1 19 10a5.600 5.600 0 0 1 1 11z" fill="url(#cl)" /></svg>
        <span className="absolute -top-[7px] left-[12px] flex size-4 items-center justify-center rounded-full bg-[#ff99a4] text-[11px] text-[#1b1b1b]">3</span>
      </span>
      <span className="ml-[6px] flex flex-col leading-4"><span>22°C</span><span className="whitespace-nowrap tracking-[0.180px] text-[#cfcfcf]">Mayorm. nublado</span></span>
    </div>
    <svg width="24" height="24" viewBox="0 0 24 24" className="shrink-0"><defs><linearGradient id="wn" x1="0" y1="0" x2="1" y2="1"><stop offset="0" stopColor="#8be8ff" /><stop offset="1" stopColor="#0f8ff0" /></linearGradient></defs><path d="M.5.500h11v11H.5zM12.500.500h11v11h-11zM.5 12.500h11v11H.5zM12.500 12.500h11v11h-11z" fill="url(#wn)" /></svg>
    <div className="ml-[13px] flex h-8 w-[220px] items-center rounded-full border border-[#555] bg-[#3a3a3a] pl-[11px] text-[13px] text-[#cfcfcf]">
      <Svg s={15} sw={1.600}><circle cx="7" cy="7" r="5.800" /><path d="m11 11 4 4" /></Svg>
      <span className="ml-[10px] flex-1 tracking-[-0.050px]">Búsqueda</span>
      <svg width="50" height="24" viewBox="0 0 50 24" className="mr-px"><path d="M15 7c5 2 8 4 13 5s10 1 14 0" stroke="#7a4a3a" strokeWidth="1.500" fill="none" /><path d="M41 11h8" stroke="#9a5b40" strokeWidth="3.500" /><Flower x={16} y={8} r={5.5} /><Flower x={25} y={13} r={5} /><Flower x={36} y={11} r={8} /><circle cx="5" cy="12" r="2.800" fill="#ef8fa0" /><circle cx="6" cy="20" r="1.700" fill="#f3a3b0" /><circle cx="11.500" cy="18" r="2.300" fill="#f7b2bd" /></svg>
    </div>
    <div className="ml-1 flex gap-1">
      <TaskApp><svg width="26" height="24" viewBox="0 0 26 24"><rect x="7" y="1" width="17" height="16" fill="#f3f3f3" /><rect x="2" y="7" width="16" height="15" fill="#6f6f6f" fillOpacity=".85" /></svg></TaskApp>
      <TaskApp dot><svg width="25" height="25" viewBox="0 0 24 24"><path d="M17.500 0 7.500 9.300 3 5.800 1 6.700v2L17.500 24z" fill="#0d79c4" /><path d="M17.500 0 1 15.300v2l2 .9L17.500 6.500z" fill="#1689d6" /><path d="M1 8.700 17.500 24v-6.500L6.500 9.500z" fill="#0b6db3" /><path d="M17.500 0 23 2.600v18.800L17.500 24z" fill="#2ba4ee" /></svg></TaskApp>
      <TaskApp><span className="flex h-[26px] w-[26px] flex-col items-center">
        <svg width="26" height="18" viewBox="0 0 26 18"><path d="M9 1h8c2 0 3 1 3.500 3l.5 2h-4c-2 0-3 1-3.500 3l-1.500 5c-.5 2-1.500 3-3.500 3H3c-2 0-3-1.500-2.300-3.500L4.500 4C5.200 2 6.500 1 9 1z" fill="#1b9de2" /><path d="M9 1h8c2 0 3 1 3.500 3H14z" fill="#2466d8" /><path d="M2.500 8h10.700L11.500 14H.8z" fill="#3fb868" /><path d="M17 6h6c2 0 3 1.500 2.300 3.500L23 15c-.7 1.500-2 2.500-4 2.500h-7c2 0 2.500-1 3-3l1.500-6C17 7 17 6 17 6z" fill="#c45ad5" /><path d="M14.500 13.500H23.500C22.500 16 21 17.500 19 17.500h-7c1.500-.5 2-2 2.500-4z" fill="#f0787a" /><path d="M.8 13h10.800L10.500 17H3c-2 0-2.500-2-2.200-4z" fill="#d7cf3e" /></svg>
        <span className="h-[9px] bg-black px-[2px] text-[7px] font-bold leading-[9px] text-white">M365</span></span></TaskApp>
      <TaskApp dot><svg width="27" height="28" viewBox="0 0 27 28"><circle cx="12" cy="16" r="11" fill="#fbc116" /><path d="M2.500 10.500A11 11 0 0 1 21.500 10.500H12L9 18z" fill="#e33b2e" /><path d="M2.500 10.500 8.500 19l4.500 2-3 6A11 11 0 0 1 2.500 10.500z" fill="#1fa14b" /><circle cx="12" cy="16" r="5.500" fill="#fff" /><circle cx="12" cy="16" r="4.300" fill="#2f74ea" /><circle cx="20" cy="7" r="7" fill="#0b2534" /><path d="M17 4c2 1 3 4 2 8M22 3v7" stroke="#3f7f95" strokeWidth="1" fill="none" /></svg></TaskApp>
      <TaskApp dot><svg width="24" height="24" viewBox="0 0 24 24"><path d="M1 3c0-1 .5-1.500 1.500-1.500h6L11 4h11c.8 0 1.500.5 1.500 1.500V9H1z" fill="#dd9a12" /><rect x="1" y="5" width="22.500" height="17.500" rx="1.500" fill="#ffd04c" /><path d="M5 22.500V17c0-1.200.8-2 2-2h10.500c1.200 0 2 .8 2 2v5.500z" fill="#0c72c4" /><path d="M8 19.500h8.500" stroke="#0a579a" strokeWidth="1.500" /></svg></TaskApp>
      <TaskApp><svg width="24" height="26" viewBox="0 0 24 26" fill="none"><path d="M3 4v12c0 1.500 11 1.500 11 0V4z" fill="#f0c54a" /><ellipse cx="8.500" cy="4" rx="5.500" ry="2.500" fill="#ffe28a" /><path d="M17 2h5v5M2 19v5h5" stroke="#4a9c4e" strokeWidth="2" /><path d="m12 22 9-9M13 14l9 9" stroke="#c8641a" strokeWidth="2.200" /><path d="m10.500 15 4-3.500M18.500 12.500l4 3" stroke="#d8762a" strokeWidth="2.500" /></svg></TaskApp>
      <TaskApp on><BraveMark w={20} h={24} /></TaskApp>
    </div>
    <div className="ml-auto flex items-center">
      <I n="up" s={18} sw={1.500} />
      <span className="ml-[17px] w-[24px] text-center leading-4">ESP<br />LAA</span>
      <Svg s={18} sw={1.400} className="ml-[17px]"><path d="M1 6.500c4-4 10-4 14 0M3.200 9c2.800-2.800 6.800-2.800 9.600 0M5.400 11.300c1.600-1.500 3.600-1.500 5.200 0" /><circle cx="8" cy="13.300" r="1" fill="currentColor" /></Svg>
      <Svg s={16} sw={1.300} className="ml-[6px]"><path d="M1 5.700h2.700L7.700 2.300v11.400L3.700 10.300H1zM10.500 6l4.200 4.200M14.700 6l-4.200 4.200" /></Svg>
      <Svg s={17} sw={1.300} className="ml-[8px]"><path d="M7 4.500h6c.7 0 1.200.5 1.200 1.200v5.600c0 .7-.5 1.200-1.200 1.200H3c-.7 0-1.200-.5-1.200-1.200V8M15.500 7v3" /><path d="M2.200 1v3M4.800 1v3M1 4h5v1.500C6 7 5 7.500 3.500 7.500S1 7 1 5.500z" /><path d="M4 11h3l2-4.500" /></Svg>
      <span className="ml-[11px] w-[61px] whitespace-nowrap text-right leading-4"><span>2:18 p. m.</span><br /><span className="tracking-[0.180px]">7/03/2025</span></span>
      <Svg s={17} sw={1.300} className="ml-[6px] mr-[20px]"><path d="M8 1.500C5.300 1.500 3.500 3.500 3.500 6v3L2 12.300h12L12.500 9M6 12.500c.2 1.300.9 2 2 2s1.800-.7 2-2" /><path d="M6.500 5.500h3l-3 3.500h3M11.500 1h3.300l-3.300 4h3.300" /></Svg>
    </div>
  </footer>
);

export default function App() {
  return (
    <div className="flex h-[768px] w-[1366px] flex-col overflow-hidden bg-white font-['Open_Sans','Noto_Sans',sans-serif] leading-normal">
      <TabStrip />
      <Toolbar />
      <Bookmarks />
      <Header />
      <div className="flex h-[557px] shrink-0">
        <Sidebar />
        <Main />
      </div>
      <Taskbar />
    </div>
  );
}
